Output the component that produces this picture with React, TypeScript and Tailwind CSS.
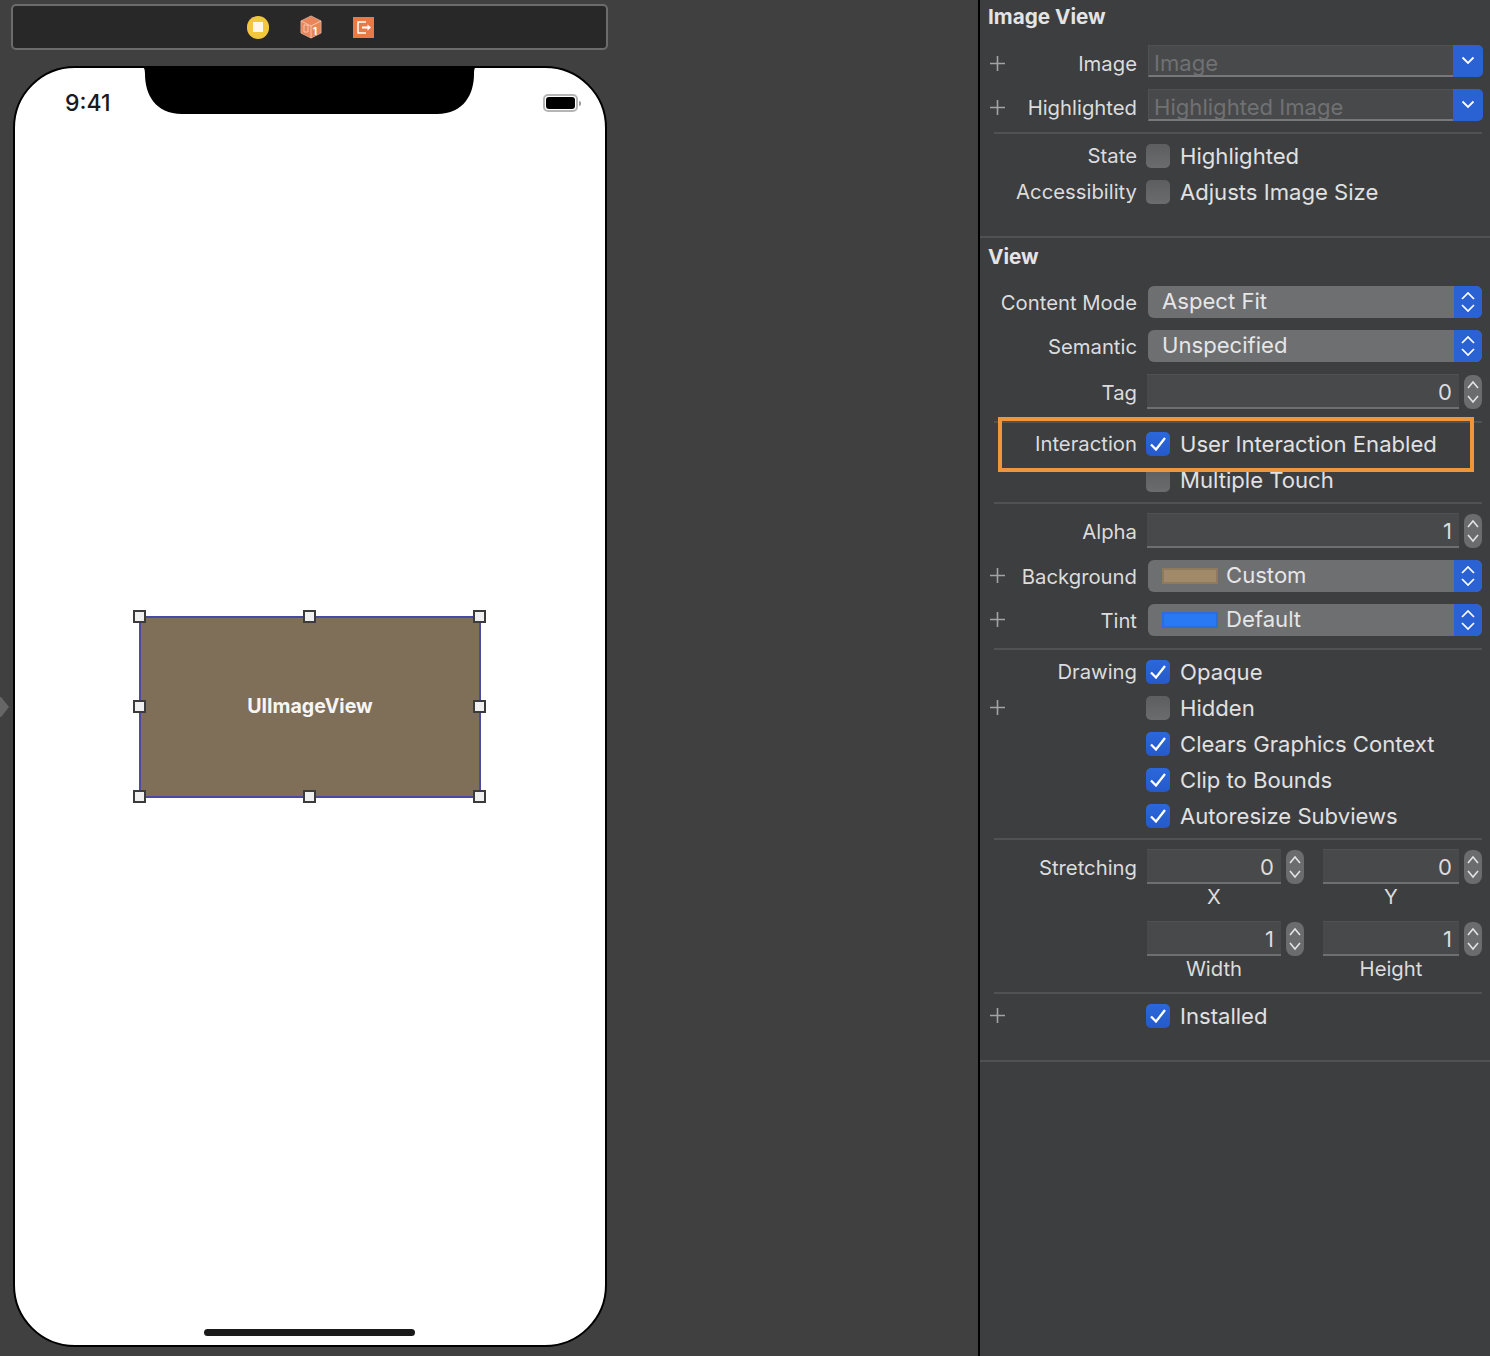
import type { ReactNode } from "react";

const font = "font-['Inter','Liberation_Sans',sans-serif]";

function Plus() {
  return (
    <svg width="15" height="15" viewBox="0 0 15 15" className="block">
      <path d="M7.5 0v15M0 7.5h15" stroke="#a2a3a4" strokeWidth="1.6" />
    </svg>
  );
}

function UpDown({ tight }: { tight?: boolean }) {
  if (tight) {
    return (
      <svg width="14" height="26" viewBox="0 0 14 26" fill="none" className="block">
        <path d="M1 10 7 4l6 6M1 16l6 6 6-6" stroke="#ffffff" strokeWidth="1.7" />
      </svg>
    );
  }
  return (
    <svg width="12" height="26" viewBox="0 0 12 26" fill="none" className="block">
      <path d="M1 9 6 3l5 6M1 17l5 6 5-6" stroke="#e4e4e5" strokeWidth="1.6" />
    </svg>
  );
}

function Row({
  label,
  plus,
  height,
  mt,
  labelPt = "pt-px",
  plusPt = "pb-[2px]",
  children,
}: {
  label?: string;
  plus?: boolean;
  height: string;
  mt: string;
  labelPt?: string;
  plusPt?: string;
  children?: ReactNode;
}) {
  return (
    <div className={`flex items-center ${height} ${mt}`}>
      <div className="w-[10px] shrink-0" />
      <div className={`flex w-[15px] shrink-0 items-center ${plusPt}`}>{plus && <Plus />}</div>
      <div
        className={`flex w-[132px] shrink-0 justify-end whitespace-nowrap text-[20.3px] leading-none text-[#dcdcdd] ${labelPt}`}
      >
        {label}
      </div>
      <div className="ml-[10px] flex min-w-0 flex-1 items-center">{children}</div>
    </div>
  );
}

function Divider({ mt }: { mt: string }) {
  return <div className={`ml-[14px] mr-[8px] h-[2px] bg-[#515254] ${mt}`} />;
}

function ImageField({ placeholder }: { placeholder: string }) {
  return (
    <div className="ml-px flex h-[32px] w-[335px]">
      <div className="flex-1 border-t border-b-2 border-l border-t-[#505153] border-b-[#77787a] border-l-[#505153] bg-[#48494b] pl-[5px] text-[22.1px] leading-[35px] text-[#707173]">
        {placeholder}
      </div>
      <div className="flex w-[30px] items-center justify-center rounded-r-[5px] bg-[#2a62d4] pb-[2px]">
        <svg width="14" height="9" viewBox="0 0 14 9" fill="none">
          <path d="M1.500 1.500 7 7l5.500-5.500" stroke="#fff" strokeWidth="1.8" />
        </svg>
      </div>
    </div>
  );
}

function Popup({ children }: { children: ReactNode }) {
  return (
    <div className="ml-px flex h-[32px] w-[334px] overflow-hidden rounded-[6px] bg-[#6e6f71] text-[22.1px] text-[#e6e6e7]">
      <div className="flex flex-1 items-center pl-[14px]">{children}</div>
      <div className="flex w-[28px] items-center justify-center bg-[#2a62d4]">
        <UpDown tight />
      </div>
    </div>
  );
}

function NumberField({ value, width }: { value: string; width: string }) {
  return (
    <div className="flex items-center">
      <div
        className={`flex h-[35px] items-center justify-end border-t border-b-2 border-t-[#505153] border-b-[#6e6f71] bg-[#48494b] pr-[7px] pt-[3px] text-[22.1px] text-[#dcdcdd] ${width}`}
      >
        {value}
      </div>
      <div className="ml-[5px] flex h-[34px] w-[18px] items-center justify-center rounded-[8px] bg-[#6b6c6e]">
        <UpDown />
      </div>
    </div>
  );
}

function Check({ on, label }: { on?: boolean; label: string }) {
  return (
    <div className="-ml-px flex items-center">
      <div
        className={`flex h-[24px] w-[24px] items-center justify-center rounded-[5px] bg-linear-to-b ${
          on ? "from-[#2b68dc] to-[#2559c9]" : "from-[#5d5e60] to-[#6b6c6e]"
        }`}
      >
        {on && (
          <svg width="16" height="14" viewBox="0 0 16 14" fill="none">
            <path d="M1 7.500 6 12.500 15 1" stroke="#fff" strokeWidth="2.3" />
          </svg>
        )}
      </div>
      <span className="ml-[10px] whitespace-nowrap text-[22.1px] leading-none text-[#e1e1e2]">{label}</span>
    </div>
  );
}

function Swatch({ color, edge }: { color: string; edge: string }) {
  return <span className={`mr-[8px] h-[16px] w-[56px] border-2 ${color} ${edge}`} />;
}

function Handle({ className }: { className: string }) {
  return <div className={`absolute h-[13px] w-[13px] border-2 border-[#3b3b3b] bg-[#f0f0f0] ${className}`} />;
}

function Toolbar() {
  return (
    <div className="ml-[11px] mt-[4px] flex h-[46px] w-[597px] items-center justify-center rounded-[5px] border-2 border-[#6c6c6c] bg-[#282828]">
      <div className="ml-[2px] flex items-center gap-[31px]">
        <div className="flex h-[23px] w-[22px] items-center justify-center rounded-full bg-[#f3c73d]">
          <div className="h-[10px] w-[10px] bg-[#fdf8e6]" />
        </div>
        <svg width="22" height="24" viewBox="0 0 22 24">
          <path d="M11 1 21 6v12l-10 5L1 18V6z" fill="#e98558" stroke="#d8a890" strokeWidth="1" />
          <path d="M11 11v12M1 6l10 5 10-5" stroke="#f6c6ad" strokeWidth="1" fill="none" />
          <text x="15" y="20" fontSize="10" fontWeight="700" fill="#fff" textAnchor="middle">
            1
          </text>
          <path d="M4 10h4v7H4z" fill="none" stroke="#f6c6ad" strokeWidth="1" />
        </svg>
        <svg width="21" height="21" viewBox="0 0 21 21">
          <rect width="21" height="21" fill="#ea7a45" />
          <path d="M13 5H5v11h8" stroke="#fff" strokeWidth="1.5" fill="none" />
          <path d="M9 10.500h6" stroke="#fff" strokeWidth="2" />
          <path d="M14.500 7.500 18 10.500l-3.500 3z" fill="#fff" />
        </svg>
      </div>
    </div>
  );
}

function Phone() {
  return (
    <div className="relative ml-[13px] mt-[16px] flex h-[1281px] w-[594px] items-center justify-center rounded-[62px] border-2 border-black bg-white">
      {/* notch */}
      <svg width="340" height="49" viewBox="0 0 340 49" className="absolute left-[124px] top-[-2px]">
        <path d="M1 0H339C336 0 335 3 335 8 335 28 325 48 298 48H43C16 48 6 28 6 8 6 3 5 0 1 0Z" fill="#000" />
      </svg>
      <div className="absolute left-[50px] top-[21px] text-[23px] font-medium leading-[28px] text-[#1a1a1a]">9:41</div>
      {/* battery */}
      <div className="absolute left-[528px] top-[26px] flex items-center">
        <div className="flex h-[18px] w-[35px] items-center justify-center rounded-[5px] border-2 border-[#b5b5b5]">
          <div className="h-[12px] w-[29px] rounded-[3px] bg-black" />
        </div>
        <div className="ml-px h-[5px] w-[2px] rounded-r-sm bg-[#9a9a9a]" />
      </div>

      {/* selected image view */}
      <div className="relative flex h-[182px] w-[342px] items-center justify-center border-2 border-[#4a4aa3] bg-[#7f6f59] text-[19.6px] font-bold text-[#f6f6f6]">
        UIImageView
        <Handle className="left-[-8px] top-[-8px]" />
        <Handle className="left-[162px] top-[-8px]" />
        <Handle className="right-[-7px] top-[-8px]" />
        <Handle className="left-[-8px] top-[82px]" />
        <Handle className="right-[-7px] top-[82px]" />
        <Handle className="bottom-[-7px] left-[-8px]" />
        <Handle className="bottom-[-7px] left-[162px]" />
        <Handle className="bottom-[-7px] right-[-7px]" />
      </div>

      <div className="absolute bottom-[9px] left-[189px] h-[7px] w-[211px] rounded-full bg-[#1a1a1a]" />
    </div>
  );
}

function AxisLabels({ left, right }: { left: string; right: string }) {
  return (
    <div className="flex h-[26px] items-center text-[20.3px] leading-none text-[#dcdcdd]">
      <div className="ml-[167px] w-[134px] text-center">{left}</div>
      <div className="ml-[42px] w-[136px] text-center">{right}</div>
    </div>
  );
}

function Inspector() {
  return (
    <div className="relative h-full flex-1 border-l-2 border-black bg-[#3d3e40]">
      <div className="flex h-[34px] items-center pl-[8px] text-[20.7px] font-bold text-[#e4e4e5]">Image View</div>
      <Row label="Image" plus height="h-[32px]" mt="mt-[11px]" labelPt="pt-[6px]" plusPt="pt-[4px]">
        <ImageField placeholder="Image" />
      </Row>
      <Row label="Highlighted" plus height="h-[32px]" mt="mt-[12px]" labelPt="pt-[6px]" plusPt="pt-[4px]">
        <ImageField placeholder="Highlighted Image" />
      </Row>
      <Divider mt="mt-[11px]" />
      <Row label="State" height="h-[36px]" mt="mt-[4px]">
        <Check label="Highlighted" />
      </Row>
      <Row label="Accessibility" height="h-[36px]" mt="mt-0">
        <Check label="Adjusts Image Size" />
      </Row>
      <div className="mt-[26px] h-[2px] bg-[#515254]" />

      <div className="mt-[2px] flex h-[34px] items-center pl-[8px] text-[20.7px] font-bold text-[#e4e4e5]">View</div>
      <Row label="Content Mode" height="h-[32px]" mt="mt-[12px]" labelPt="pt-[2px]">
        <Popup>Aspect Fit</Popup>
      </Row>
      <Row label="Semantic" height="h-[32px]" mt="mt-[12px]" labelPt="pt-[2px]">
        <Popup>Unspecified</Popup>
      </Row>
      <Row label="Tag" height="h-[35px]" mt="mt-[12px]" labelPt="pt-[4px]">
        <NumberField value="0" width="w-[312px]" />
      </Row>
      <Divider mt="mt-[12px]" />
      <Row label="Interaction" height="h-[36px]" mt="mt-[3px]">
        <Check on label="User Interaction Enabled" />
      </Row>
      <Row label="" height="h-[36px]" mt="mt-0">
        <Check label="Multiple Touch" />
      </Row>
      <Divider mt="mt-[4px]" />
      <Row label="Alpha" height="h-[35px]" mt="mt-[9px]" labelPt="pt-[4px]">
        <NumberField value="1" width="w-[312px]" />
      </Row>
      <Row label="Background" plus height="h-[32px]" mt="mt-[12px]" labelPt="pt-[2px]">
        <Popup>
          <Swatch color="bg-[#a08a6a]" edge="border-[#8f7a5c]" />
          Custom
        </Popup>
      </Row>
      <Row label="Tint" plus height="h-[32px]" mt="mt-[12px]" labelPt="pt-[2px]">
        <Popup>
          <Swatch color="bg-[#2979f4]" edge="border-[#2a6ddc]" />
          Default
        </Popup>
      </Row>
      <Divider mt="mt-[12px]" />
      <Row label="Drawing" height="h-[36px]" mt="mt-[4px]">
        <Check on label="Opaque" />
      </Row>
      <Row plus height="h-[36px]" mt="mt-0">
        <Check label="Hidden" />
      </Row>
      <Row height="h-[36px]" mt="mt-0">
        <Check on label="Clears Graphics Context" />
      </Row>
      <Row height="h-[36px]" mt="mt-0">
        <Check on label="Clip to Bounds" />
      </Row>
      <Row height="h-[36px]" mt="mt-0">
        <Check on label="Autoresize Subviews" />
      </Row>
      <Divider mt="mt-[4px]" />
      <Row label="Stretching" height="h-[35px]" mt="mt-[9px]" labelPt="pt-[4px]">
        <NumberField value="0" width="w-[134px]" />
        <div className="ml-[19px]">
          <NumberField value="0" width="w-[136px]" />
        </div>
      </Row>
      <AxisLabels left="X" right="Y" />
      <Row height="h-[35px]" mt="mt-[11px]">
        <NumberField value="1" width="w-[134px]" />
        <div className="ml-[19px]">
          <NumberField value="1" width="w-[136px]" />
        </div>
      </Row>
      <AxisLabels left="Width" right="Height" />
      <Divider mt="mt-[10px]" />
      <Row plus height="h-[36px]" mt="mt-[4px]">
        <Check on label="Installed" />
      </Row>
      <div className="mt-[26px] h-[2px] bg-[#515254]" />

      {/* orange highlight */}
      <div className="absolute left-[18px] top-[417px] h-[55px] w-[476px] border-4 border-[#f0963a]" />
    </div>
  );
}

export default function App() {
  return (
    <div className={`flex h-[1356px] w-[1490px] overflow-hidden bg-[#404040] ${font}`}>
      <div className="relative h-full w-[978px] shrink-0">
        <Toolbar />
        <Phone />
        {/* canvas arrow */}
        <svg width="10" height="20" viewBox="0 0 10 20" className="absolute left-0 top-[697px]">
          <path d="M0 0h1l8 10-8 10H0z" fill="#666666" />
        </svg>
      </div>
      <Inspector />
    </div>
  );
}
